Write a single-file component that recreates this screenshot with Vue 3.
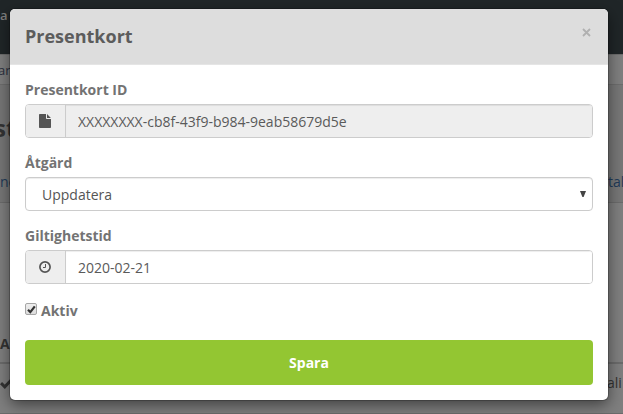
<template>
  <div class="page">
    <div class="backdrop-page">
      <div class="navbar"><span>a</span></div>
      <div class="breadcrumb"><span>ar</span></div>
      <div class="page-head">
        <h1>st</h1>
        <div class="tabs">
          <span>ne</span>
          <span class="tab-end">tal</span>
        </div>
      </div>
      <div class="table-head"><span>A</span></div>
      <div class="table-row">
        <svg class="row-check" viewBox="0 0 14 11">
          <path d="M1 5.2 L4.8 8.8 L12.2 1" fill="none" stroke="currentColor" stroke-width="3" />
        </svg>
        <span class="row-end">ali</span>
      </div>
    </div>

    <div class="modal">
      <div class="modal-header">
        <h4>Presentkort</h4>
        <button class="close" type="button" aria-label="Stäng">
          <svg viewBox="0 0 9 9"><path d="M1 1 L8 8 M8 1 L1 8" /></svg>
        </button>
      </div>
      <form class="modal-body" @submit.prevent>
        <div class="form-group">
          <label>Presentkort ID</label>
          <div class="input-group">
            <span class="addon">
              <svg class="icon-file" viewBox="0 0 12 14">
                <path d="M0 0.8 Q0 0 0.8 0 H7 V4.2 Q7 5 7.8 5 H12 V13.2 Q12 14 11.2 14 H0.8 Q0 14 0 13.2 Z M8 0.1 L11.9 4 H8 Z" />
              </svg>
            </span>
            <input v-model="cardId" type="text" readonly />
          </div>
        </div>
        <div class="form-group">
          <label>Åtgärd</label>
          <div class="select">
            <span>{{ action }}</span>
            <svg viewBox="0 0 6 6"><path d="M0 0 H6 L3.6 6 H2.4 Z" /></svg>
          </div>
        </div>
        <div class="form-group">
          <label>Giltighetstid</label>
          <div class="input-group">
            <span class="addon">
              <svg class="icon-clock" viewBox="0 0 12 12">
                <circle cx="6" cy="6" r="5.1" stroke-width="1.7" />
                <path d="M6.5 3 V6.5 H4" stroke-width="1" />
              </svg>
            </span>
            <input v-model="validUntil" type="text" />
          </div>
        </div>
        <div class="checkbox" @click="active = !active">
          <span class="box">
            <svg v-if="active" viewBox="0 0 9 9">
              <path d="M1 4.8 L3.3 7.1 L7.8 1.3" />
            </svg>
          </span>
          <label>Aktiv</label>
        </div>
        <button class="save" type="submit">Spara</button>
      </form>
    </div>
  </div>
</template>

<script setup>
import { ref } from 'vue'

const cardId = ref('XXXXXXXX-cb8f-43f9-b984-9eab58679d5e')
const action = ref('Uppdatera')
const validUntil = ref('2020-02-21')
const active = ref(true)
</script>

<style>
body {
  overflow: hidden;
}
</style>

<style scoped>
* {
  box-sizing: border-box;
}

.page {
  position: relative;
  width: 623px;
  height: 414px;
  overflow: hidden;
  font-family: "Open Sans", "Noto Sans", sans-serif;
  font-size: 14px;
  line-height: 20px;
  color: #555;
}

.backdrop-page {
  display: flex;
  flex-direction: column;
  height: 414px;
  background: #7f7f7f;
  color: #333;
}

.navbar {
  height: 54px;
  padding-top: 5px;
  background: #202628;
  color: #7f7f7f;
  font-size: 13px;
  font-weight: 600;
}

.breadcrumb {
  height: 31px;
  padding-top: 5px;
  border-top: 1px solid #6d6d6d;
  border-bottom: 1px solid #6d6d6d;
  color: #2b2f3e;
  font-size: 13px;
}

.breadcrumb span {
  margin-left: -2px;
}

.page-head {
  display: flex;
  flex-direction: column;
  height: 118px;
  padding-top: 27px;
  background: #777;
  border-bottom: 1px solid #6b6b6b;
}

.page-head h1 {
  margin: 0 0 0 -6px;
  font-size: 24px;
  line-height: 32px;
  font-weight: 700;
}

.tabs {
  display: flex;
  justify-content: space-between;
  margin-top: 28px;
  color: #213a58;
}

.tab-end {
  width: 15px;
}

.table-head {
  display: flex;
  align-items: flex-end;
  height: 161px;
  padding-bottom: 8px;
  border-bottom: 2px solid #6b6b6b;
  font-weight: 700;
}

.table-row {
  display: flex;
  justify-content: space-between;
  height: 50px;
  padding-top: 9px;
  border-bottom: 1px solid #6b6b6b;
}

.row-check {
  width: 14px;
  height: 11px;
  margin-top: 5px;
}

.row-end {
  width: 16px;
}

.modal {
  position: absolute;
  top: 9px;
  left: 10px;
  width: 598px;
  height: 391px;
  background: #fff;
  border-radius: 5px;
  box-shadow: 0 5px 15px rgba(0, 0, 0, 0.5), 0 0 0 1px rgba(0, 0, 0, 0.2);
  overflow: visible;
}

.modal-header {
  display: flex;
  justify-content: space-between;
  align-items: flex-start;
  height: 56px;
  padding: 15px;
  background: #ddd;
  border-bottom: 1px solid #e5e5e5;
  border-radius: 5px 5px 0 0;
}

.modal-header h4 {
  margin: 0;
  font-size: 18px;
  line-height: 25px;
  font-weight: 700;
  color: #5c5c5c;
}

.close {
  display: flex;
  margin: 4px 2px 0 0;
  padding: 0;
  border: 0;
  background: none;
  cursor: pointer;
}

.close svg {
  width: 9px;
  height: 9px;
  fill: none;
  stroke: #b0b0b0;
  stroke-width: 1.8;
}

.modal-body {
  padding: 15px;
}

.form-group {
  margin-bottom: 15px;
}

label {
  display: block;
  height: 20px;
  margin-bottom: 4px;
  font-weight: 700;
  color: #737373;
}

.input-group,
.select {
  display: flex;
  height: 34px;
  border: 1px solid #ccc;
  border-radius: 4px;
  background: #fff;
  overflow: hidden;
}

.addon {
  display: flex;
  align-items: center;
  justify-content: center;
  width: 40px;
  padding-right: 1px;
  background: #eee;
  border-right: 1px solid #ccc;
}

.icon-file {
  width: 12px;
  height: 14px;
  fill: #555;
}

.icon-clock {
  width: 12px;
  height: 12px;
  fill: none;
  stroke: #555;
}

input {
  flex: 1;
  min-width: 0;
  padding: 2px 12px 0;
  border: 0;
  outline: 0;
  background: #fff;
  box-shadow: inset 0 1px 1px rgba(0, 0, 0, 0.075);
  font: inherit;
  color: #5a5a5a;
}

input[readonly] {
  background: #eee;
}

.select {
  align-items: center;
  justify-content: space-between;
  padding: 2px 6px 0 16px;
  box-shadow: inset 0 1px 1px rgba(0, 0, 0, 0.075);
}

.select svg {
  width: 6px;
  height: 6px;
  margin-bottom: 3px;
  fill: #444;
}

.checkbox {
  display: flex;
  height: 20px;
  margin: 17px 0 19px;
}

.checkbox label {
  margin: 0;
}

.box {
  display: flex;
  align-items: center;
  justify-content: center;
  width: 12px;
  height: 12px;
  margin: 2px 4px 0 0;
  border: 1px solid #a6a6a6;
  border-radius: 2px;
  background: linear-gradient(#eee, #ddd);
}

.box svg {
  width: 9px;
  height: 9px;
  fill: none;
  stroke: #333;
  stroke-width: 2.2;
}

.save {
  display: block;
  width: 100%;
  height: 45px;
  padding: 0;
  border: 0;
  border-radius: 4px;
  background: #93c632;
  color: #fff;
  font: inherit;
  font-weight: 700;
  cursor: pointer;
}
</style>
